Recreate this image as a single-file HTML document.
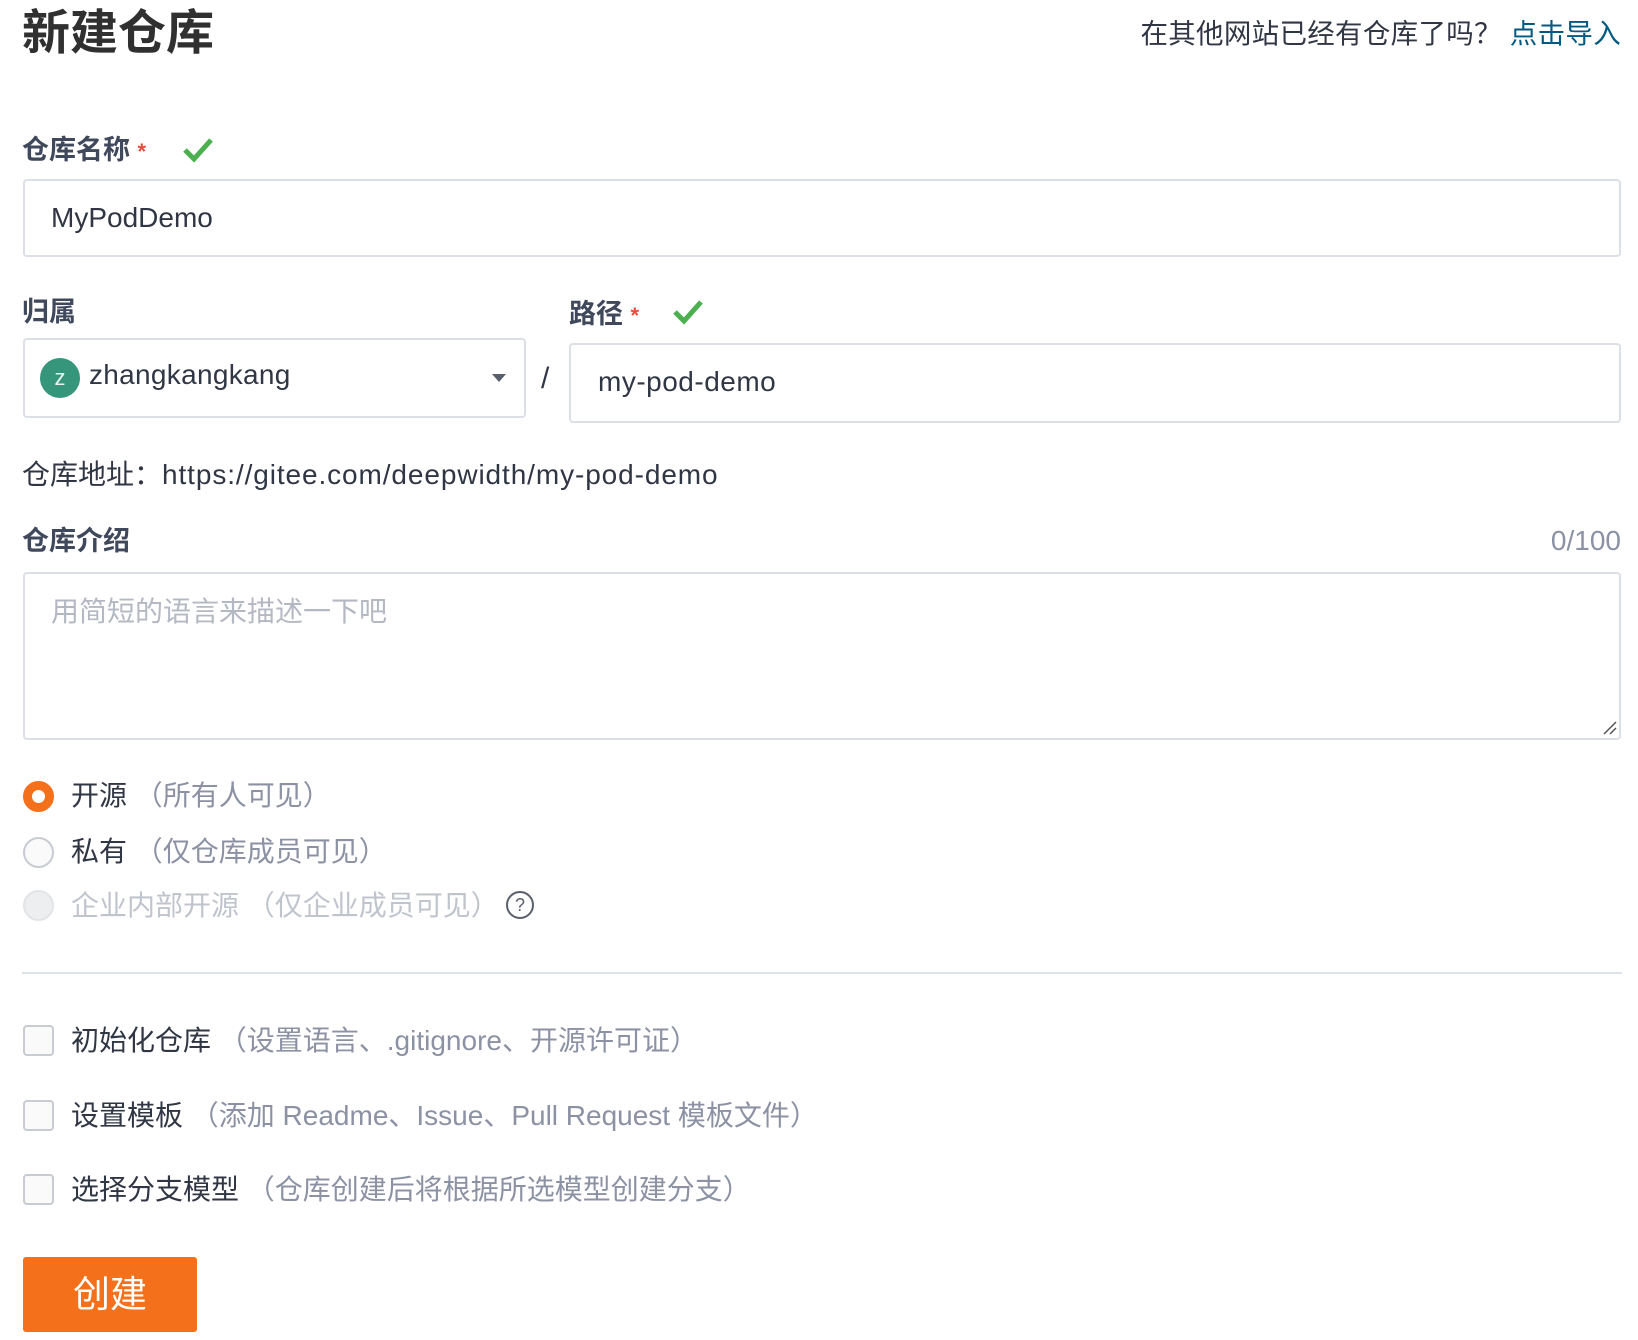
<!DOCTYPE html>
<html><head><meta charset="utf-8"><style>
*{box-sizing:border-box;margin:0;padding:0}
body{width:1638px;height:1340px;background:#fff;font-family:"Liberation Sans","Noto Sans CJK SC",sans-serif;color:#40485b;position:relative;overflow:hidden}
.a{position:absolute;white-space:nowrap}
.lbl{font-size:27px;font-weight:bold;color:#40485b;line-height:32px}
.star{color:#e74c3c;font-size:22px}
.box{position:absolute;border:2px solid #dce0e6;border-radius:4px;background:#fff}
.gray{color:#8c92a4}
.radio{position:absolute;left:23px;width:31px;height:31px;border-radius:50%;border:2px solid #c8cbd2;background:#fafafa}
.cb{position:absolute;left:23px;width:31px;height:31px;border-radius:4px;border:2px solid #c8cbd2;background:#fafafa}
.opt{font-size:28px;line-height:32px;color:#303643}
</style></head><body>
<div class="a" style="left:22px;top:6px;font-size:48px;font-weight:bold;color:#303030;line-height:56px">新建仓库</div>
<div class="a" style="right:17px;top:17px;font-size:27.5px;line-height:34px;color:#303643;letter-spacing:0.3px">在其他网站已经有仓库了吗？ <span style="color:#005980">点击导入</span></div>

<div class="a lbl" style="left:22px;top:134px">仓库名称 <span class="star">*</span></div>
<svg class="a" style="left:182px;top:136px" width="32" height="28" viewBox="0 0 32 28"><path d="M3 14 L12 23 L29 4" stroke="#4caf50" stroke-width="5" fill="none"/></svg>
<div class="box" style="left:23px;top:179px;width:1598px;height:78px"></div>
<div class="a" style="left:51px;top:201px;font-size:28px;line-height:34px;color:#303643">MyPodDemo</div>

<div class="a lbl" style="left:22px;top:296px">归属</div>
<div class="a lbl" style="left:569px;top:298px">路径 <span class="star">*</span></div>
<svg class="a" style="left:672px;top:298px" width="32" height="28" viewBox="0 0 32 28"><path d="M3 14 L12 23 L29 4" stroke="#4caf50" stroke-width="5" fill="none"/></svg>
<div class="box" style="left:23px;top:338px;width:503px;height:80px"></div>
<div class="a" style="left:40px;top:358px;width:40px;height:40px;border-radius:50%;background:#35967c;color:#e8f5f0;font-size:22px;text-align:center;line-height:40px">z</div>
<div class="a" style="left:89px;top:358px;font-size:28px;line-height:34px;color:#303643;letter-spacing:0.3px">zhangkangkang</div>
<div class="a" style="left:492px;top:374px;width:0;height:0;border-left:7px solid transparent;border-right:7px solid transparent;border-top:8px solid #5a5f6b"></div>
<div class="a" style="left:541px;top:362px;font-size:30px;color:#303643">/</div>
<div class="box" style="left:569px;top:343px;width:1052px;height:80px"></div>
<div class="a" style="left:598px;top:365px;font-size:28px;line-height:34px;color:#303643;letter-spacing:0.5px">my-pod-demo</div>

<div class="a" style="left:22px;top:458px;font-size:28px;line-height:34px;color:#303643">仓库地址：<span style="letter-spacing:0.9px">https://gitee.com/deepwidth/my-pod-demo</span></div>

<div class="a lbl" style="left:22px;top:525px">仓库介绍</div>
<div class="a gray" style="right:17px;top:524px;font-size:28px;line-height:34px">0/100</div>
<div class="box" style="left:23px;top:572px;width:1598px;height:168px"></div>
<div class="a" style="left:51px;top:595px;font-size:28px;line-height:34px;color:#b4b8c2">用简短的语言来描述一下吧</div>
<svg class="a" style="left:1602px;top:720px" width="16" height="16"><path d="M2 14 L14 2 M8 14 L14 8" stroke="#555" stroke-width="1.5"/></svg>

<div class="radio" style="top:781px;border:9px solid #f5701a;background:#fff"></div>
<div class="a opt" style="left:71px;top:780px">开源 <span class="gray">（所有人可见）</span></div>
<div class="radio" style="top:837px"></div>
<div class="a opt" style="left:71px;top:836px">私有 <span class="gray">（仅仓库成员可见）</span></div>
<div class="radio" style="top:890px;border-color:#e2e4e8;background:#eceef0"></div>
<div class="a opt" style="left:71px;top:890px;color:#c0c4cc">企业内部开源 （仅企业成员可见）</div>
<div class="a" style="left:506px;top:891px;width:28px;height:28px;border:2px solid #5a5f6b;border-radius:50%;font-size:18px;line-height:24px;text-align:center;color:#5a5f6b">?</div>

<div class="a" style="left:22px;top:972px;width:1600px;height:2px;background:#dde2e8"></div>

<div class="cb" style="top:1025px"></div>
<div class="a opt" style="left:71px;top:1025px">初始化仓库 <span class="gray">（设置语言、.gitignore、开源许可证）</span></div>
<div class="cb" style="top:1100px"></div>
<div class="a opt" style="left:71px;top:1100px">设置模板 <span class="gray">（添加 Readme、Issue、Pull Request 模板文件）</span></div>
<div class="cb" style="top:1174px"></div>
<div class="a opt" style="left:71px;top:1174px">选择分支模型 <span class="gray">（仓库创建后将根据所选模型创建分支）</span></div>

<div class="a" style="left:23px;top:1257px;width:174px;height:75px;background:#f5701a;border-radius:3px;color:#fff;font-size:37px;text-align:center;line-height:75px">创建</div>
</body></html>
